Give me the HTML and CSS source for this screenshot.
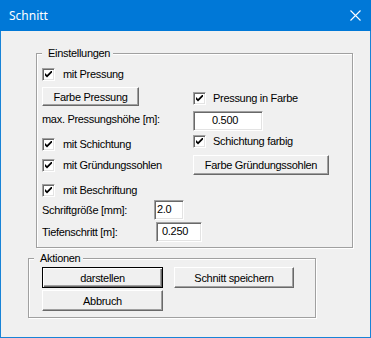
FILE: index.html
```html
<!DOCTYPE html>
<html lang="de">
<head>
  <meta charset="UTF-8" />
  <title>Schnitt</title>
  <link rel="stylesheet" href="styles.css">
</head>
<body>
  <div class="window">
    <div class="titlebar">
      <span class="title">Schnitt</span>
      <svg class="close" width="11" height="11" viewBox="0 0 11 11">
        <path d="M0.5 0.5L10.5 10.5M10.5 0.5L0.5 10.5" stroke="#fff" stroke-width="1.1" fill="none"/>
      </svg>
    </div>

    <div class="client">
      <fieldset class="group settings">
        <legend>Einstellungen</legend>
        <div class="columns">
          <div class="col">
            <label class="check"><span class="box"><svg width="7" height="7" viewBox="0 0 7 7"><path d="M0 2L2 4L7 -1V1.5L2 6.6L0 4.6Z"/></svg></span>mit Pressung</label>
            <button type="button" class="btn btn-farbe">Farbe Pressung</button>
            <div class="caption cap-max">max. Pressungshöhe [m]:</div>
            <label class="check chk-schicht"><span class="box"><svg width="7" height="7" viewBox="0 0 7 7"><path d="M0 2L2 4L7 -1V1.5L2 6.6L0 4.6Z"/></svg></span>mit Schichtung</label>
            <label class="check chk-gruend"><span class="box"><svg width="7" height="7" viewBox="0 0 7 7"><path d="M0 2L2 4L7 -1V1.5L2 6.6L0 4.6Z"/></svg></span>mit Gründungssohlen</label>
            <label class="check chk-beschr"><span class="box"><svg width="7" height="7" viewBox="0 0 7 7"><path d="M0 2L2 4L7 -1V1.5L2 6.6L0 4.6Z"/></svg></span>mit Beschriftung</label>
            <div class="field field-schrift">
              <span class="field-label lbl-schrift">Schriftgröße [mm]:</span>
              <span class="edit edit-schrift">2.0</span>
            </div>
            <div class="field field-tiefe">
              <span class="field-label lbl-tiefe">Tiefenschritt [m]:</span>
              <span class="edit edit-tiefe">0.250</span>
            </div>
          </div>

          <div class="col">
            <label class="check chk-farbe"><span class="box"><svg width="7" height="7" viewBox="0 0 7 7"><path d="M0 2L2 4L7 -1V1.5L2 6.6L0 4.6Z"/></svg></span>Pressung in Farbe</label>
            <span class="edit edit-max">0.500</span>
            <label class="check chk-farbig"><span class="box"><svg width="7" height="7" viewBox="0 0 7 7"><path d="M0 2L2 4L7 -1V1.5L2 6.6L0 4.6Z"/></svg></span>Schichtung farbig</label>
            <button type="button" class="btn btn-gruend">Farbe Gründungssohlen</button>
          </div>
        </div>
      </fieldset>

      <fieldset class="group actions">
        <legend>Aktionen</legend>
        <div class="action-grid">
          <button type="button" class="btn btn-action default">darstellen</button>
          <button type="button" class="btn btn-action">Schnitt speichern</button>
          <button type="button" class="btn btn-action">Abbruch</button>
        </div>
      </fieldset>
    </div>
  </div>
</body>
</html>
```

FILE: styles.css
```css
* {
  box-sizing: border-box;
}

body {
  margin: 0;
  font-family: "Liberation Sans", Arial, sans-serif;
  font-size: 11px;
  letter-spacing: -0.3px;
  color: #000;
  background: #f0f0f0;
}

.window {
  width: 371px;
  height: 338px;
  display: flex;
  flex-direction: column;
}

.titlebar {
  height: 31px;
  flex-shrink: 0;
  background: #0078d7;
  color: #fff;
  display: flex;
  align-items: center;
  justify-content: space-between;
  padding: 0 10px 0 9px;
}

.title {
  font-family: "Noto Sans", "Open Sans", sans-serif;
  font-size: 12px;
  letter-spacing: 0;
}

.close {
  display: block;
}

.client {
  flex: 1;
  background: #f0f0f0;
  border: 1px solid #1883d7;
  border-top: none;
  padding-top: 15px;
}

/* group boxes */
.group {
  margin: 0;
  border: 1px solid #a0a0a0;
  box-shadow: 1px 1px 0 #fff, inset 1px 1px 0 #fff;
  min-width: 0;
}

.group legend {
  line-height: 14px;
  background: #f0f0f0;
  padding: 0 3px 0 6px;
}

.settings {
  margin-left: 35px;
  width: 317px;
  padding: 8px 5px 5px 5px;
}

.actions {
  margin-left: 27px;
  margin-top: 3px;
  width: 288px;
  padding: 2px 13px 6px 13px;
}

.actions legend {
  margin-left: -8px;
}

.columns {
  display: grid;
  grid-template-columns: 151px 1fr;
}

.col {
  display: flex;
  flex-direction: column;
  align-items: flex-start;
}

/* checkboxes */
.check {
  display: flex;
  align-items: center;
  gap: 8px;
  height: 13px;
  line-height: 13px;
}

.box {
  width: 13px;
  height: 13px;
  flex-shrink: 0;
  background: #fff;
  border: 1px solid;
  border-color: #a0a0a0 #fff #fff #a0a0a0;
  box-shadow: inset 1px 1px 0 #696969, inset -1px -1px 0 #e3e3e3;
  display: flex;
  align-items: center;
  justify-content: center;
}

.box svg {
  display: block;
}

.chk-schicht { margin-top: 12px; }
.chk-gruend { margin-top: 8px; }
.chk-beschr { margin-top: 12px; }
.chk-farbe { margin-top: 24px; gap: 7px; }
.chk-farbig { margin-top: 4px; gap: 7px; }

/* buttons */
.btn {
  font: inherit;
  letter-spacing: inherit;
  color: #000;
  background: #f0f0f0;
  border: 1px solid;
  border-color: #fff #696969 #696969 #fff;
  box-shadow: inset -1px -1px 0 #a0a0a0;
  padding: 0;
  height: 20px;
  text-align: center;
}

.btn-farbe {
  width: 97px;
  height: 19px;
  margin-top: 6px;
}

.btn-gruend {
  width: 136px;
  margin-top: 7px;
}

.action-grid {
  display: grid;
  grid-template-columns: 121px 120px;
  column-gap: 11px;
  row-gap: 2px;
}

.btn-action {
  height: 21px;
}

.btn-action.default {
  border: 1px solid #000;
  box-shadow: inset 1px 1px 0 #fff, inset -1px -1px 0 #696969, inset -2px -2px 0 #a0a0a0;
}

/* labels and edit fields */
.caption {
  line-height: 13px;
  margin-top: 7px;
}

.field {
  display: flex;
  align-items: center;
  height: 20px;
}

.field-schrift { margin-top: 3px; }
.field-tiefe { margin-top: 2px; }

.lbl-schrift { width: 112px; }
.lbl-tiefe { width: 114px; }

.edit {
  display: block;
  height: 20px;
  line-height: 16px;
  background: #fff;
  border: 1px solid;
  border-color: #a0a0a0 #fff #fff #a0a0a0;
  box-shadow: inset 1px 1px 0 #696969, inset -1px -1px 0 #e3e3e3;
  padding-left: 2px;
}

.edit-schrift { width: 30px; }
.edit-tiefe { width: 46px; padding-left: 5px; }

.edit-max {
  width: 70px;
  margin-top: 6px;
  padding-left: 18px;
}
```
